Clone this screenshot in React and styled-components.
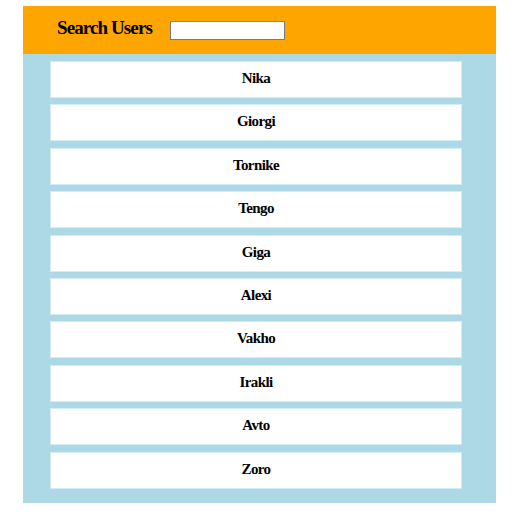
import React from "react";
import styled, { createGlobalStyle } from "styled-components";

const Global = createGlobalStyle`
  html, body { margin: 0; padding: 0; background: #fff; }
  body { font-family: "Liberation Serif", "Times New Roman", serif; }
`;

const Page = styled.div`
  padding: 6px 0 0 23px;
`;

const Panel = styled.div`
  width: 473px;
  background: #add8e6;
`;

const Header = styled.header`
  height: 48px;
  background: #ffa500;
  display: flex;
  align-items: center;
  padding-left: 34px;
  box-sizing: border-box;
  gap: 18px;
`;

const Title = styled.h2`
  margin: 0 0 5px 0;
  font-size: 19px;
  letter-spacing: -0.9px;
  font-weight: bold;
  color: #000;
`;

const SearchInput = styled.input`
  width: 115px;
  height: 19px;
  box-sizing: border-box;
  border: 1px solid #7a7a7a;
  border-top-color: #888;
  background: #fff;
  padding: 1px 2px;
  margin: 0;
  font-size: 13px;
`;

const List = styled.ul`
  list-style: none;
  margin: 0;
  padding: 7px 34px 14px 27px;
  display: flex;
  flex-direction: column;
  gap: 6.4px;
`;

const Row = styled.li`
  height: 37px;
  box-sizing: border-box;
  background: #fff;
  border: 1px solid #d4ecf3;
  display: flex;
  align-items: center;
  justify-content: center;
  padding-bottom: 2px;
  font-size: 15px;
  letter-spacing: -0.6px;
  font-weight: bold;
  color: #000;
`;

const users = ["Nika", "Giorgi", "Tornike", "Tengo", "Giga", "Alexi", "Vakho", "Irakli", "Avto", "Zoro"];

export default function App() {
  return (
    <>
      <Global />
      <Page>
        <Panel>
          <Header>
            <Title>Search Users</Title>
            <SearchInput type="text" />
          </Header>
          <List>
            {users.map((u) => (
              <Row key={u}>{u}</Row>
            ))}
          </List>
        </Panel>
      </Page>
    </>
  );
}
